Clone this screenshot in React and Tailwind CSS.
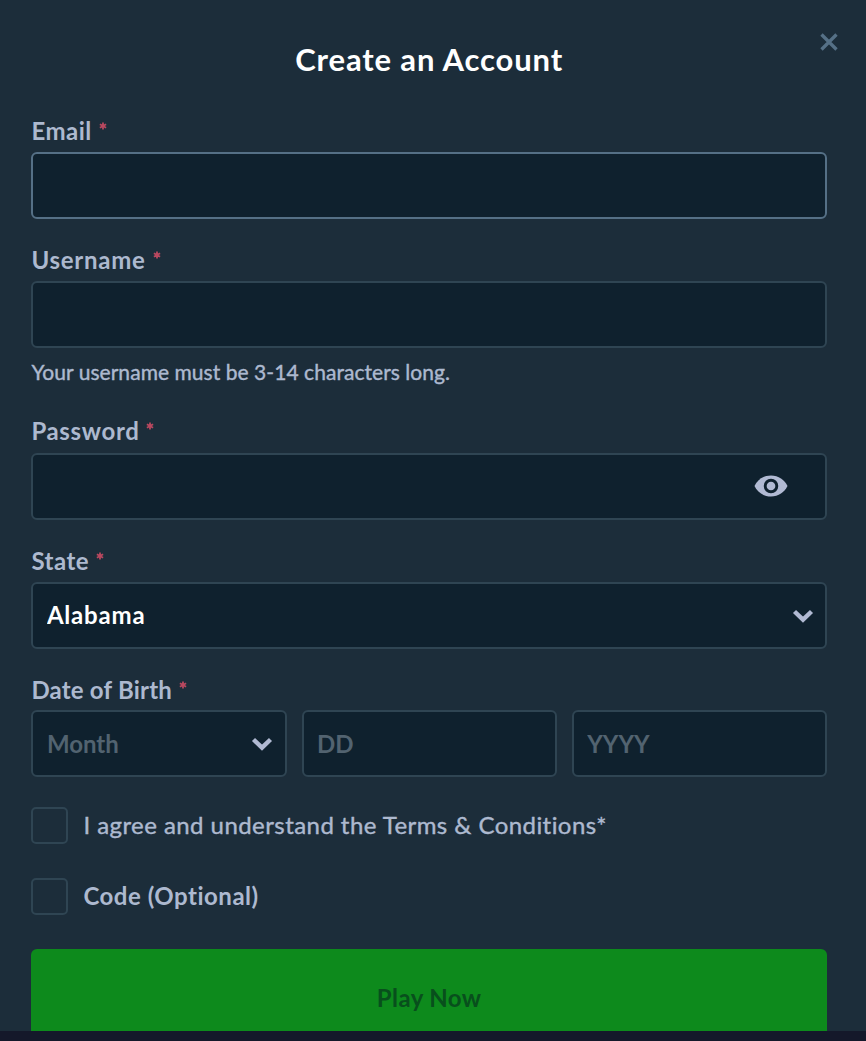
import { useState } from "react";

const boxClass =
  "block h-[67px] w-full rounded-[6px] border-2 bg-[#0f212e] px-[13.5px] text-2xl font-bold outline-none placeholder:text-[#526370] placeholder:opacity-100";
const inputClass = `${boxClass} border-[#2f4553] text-white`;

const states = ["Alabama", "Alaska", "Arizona", "Colorado", "Florida", "Texas"];
const months = ["January", "February", "March", "April", "May", "June"];

function Label({ text, className }) {
  return (
    <span className="mb-[6px] flex h-[30px] items-center text-2xl leading-[30px] font-bold whitespace-nowrap text-[#adb9cf]">
      <span className={`block ${className}`}>{text}</span>
      <svg className="mb-[11px] ml-2 h-2 w-2" viewBox="0 0 9 9">
        <path
          d="M4.5 .5V8.5M1 2.5L8 6.5M8 2.5L1 6.5"
          stroke="#b8485f"
          strokeWidth="2"
        />
      </svg>
    </span>
  );
}

function Chevron() {
  return (
    <svg
      className="pointer-events-none absolute top-[25.5px] right-[13.5px] h-[16px] w-[22px]"
      viewBox="0 0 22 16"
      fill="none"
    >
      <path d="M2.5 3.5L11 11.7L19.5 3.5" stroke="#b1bad3" strokeWidth="4.4" />
    </svg>
  );
}

function Eye() {
  return (
    <svg className="h-[22px] w-[34px]" viewBox="0 0 34 22">
      <path
        d="M17 .5C9.5 .5 3.5 4.7 .5 11C3.5 17.3 9.5 21.5 17 21.5S30.5 17.3 33.5 11C30.5 4.7 24.5 .5 17 .5Z"
        fill="#b1bad3"
      />
      <circle cx="17" cy="11" r="5.8" fill="#b1bad3" stroke="#0f212e" strokeWidth="2.9" />
    </svg>
  );
}

export default function App() {
  const [show, setShow] = useState(false);
  const [month, setMonth] = useState("");

  return (
    <div className="h-[1041px] overflow-hidden bg-[#14182a] font-[Lato,'Open_Sans',sans-serif]">
      <div className="relative h-[1031px] overflow-hidden bg-[#1c2d3a] pt-[41px] pr-[39px] pl-[31.4px]">
        <button className="absolute top-[32px] right-[27px] h-5 w-5" aria-label="Close">
          <svg className="h-5 w-5" viewBox="0 0 20 20" fill="none">
            <path d="M2.5 2.5L17.5 17.5M17.5 2.5L2.5 17.5" stroke="#557086" strokeWidth="3.3" />
          </svg>
        </button>
        <h1 className="text-center text-[31px] leading-[36px] font-bold tracking-[0.85px] text-white">
          Create an Account
        </h1>

        <form onSubmit={(e) => e.preventDefault()}>
          <label className="mt-[39px] block">
            <Label text="Email" className="w-[60px] tracking-[0.5px]" />
            <input type="email" className={`${boxClass} border-[#557086] text-white`} />
          </label>

          <label className="mt-[26px] block">
            <Label text="Username" className="w-[114px] tracking-[0.75px]" />
            <input type="text" className={inputClass} />
          </label>
          <p className="mt-[10px] text-[21px] leading-7 tracking-[0.05px] text-[#adb9cf] [-webkit-text-stroke:0.4px_#adb9cf]">
            Your username must be 3-14 characters long.
          </p>

          <label className="mt-[30px] block">
            <Label text="Password" className="mb-px w-[107px] tracking-[0.65px]" />
            <span className="relative mt-[7px] block">
              <input type={show ? "text" : "password"} className={inputClass} />
              <button
                type="button"
                className="absolute top-[22px] right-[39px]"
                onClick={() => setShow(!show)}
                aria-label="Show password"
              >
                <Eye />
              </button>
            </span>
          </label>

          <label className="mt-[26px] block">
            <Label text="State" className="w-[57px] tracking-[0.5px]" />
            <span className="relative block">
              <select className={`${inputClass} appearance-none pb-[2px] tracking-[0.8px]`}>
                {states.map((s) => (
                  <option key={s}>{s}</option>
                ))}
              </select>
              <Chevron />
            </span>
          </label>

          <div className="mt-[26px]">
            <Label text="Date of Birth" className="w-[140px] tracking-[0.2px]" />
            <div className="-mt-px grid grid-cols-3 gap-[15px]">
              <span className="relative block">
                <select
                  className={`${boxClass} appearance-none border-[#2f4553] ${month ? "text-white" : "text-[#526370]"}`}
                  value={month}
                  onChange={(e) => setMonth(e.target.value)}
                >
                  <option value="">Month</option>
                  {months.map((m) => (
                    <option key={m}>{m}</option>
                  ))}
                </select>
                <Chevron />
              </span>
              <input className={inputClass} placeholder="DD" />
              <input className={inputClass} placeholder="YYYY" />
            </div>
          </div>

          <label className="mt-[30px] flex h-[37px] items-center gap-[15px]">
            <input
              type="checkbox"
              className="h-[37px] w-[37px] appearance-none rounded-[5px] border-2 border-[#2f4553]"
            />
            <span className="mb-[2px] text-2xl tracking-[0.44px] text-[#adb9cf] [-webkit-text-stroke:0.4px_#adb9cf]">
              I agree and understand the Terms &amp; Conditions*
            </span>
          </label>
          <label className="mt-[34px] flex h-[37px] items-center gap-[15px]">
            <input
              type="checkbox"
              className="h-[37px] w-[37px] appearance-none rounded-[5px] border-2 border-[#2f4553]"
            />
            <span className="mb-[2px] text-2xl font-bold tracking-[0.52px] text-[#adb9cf]">
              Code (Optional)
            </span>
          </label>

          <button className="mt-[34px] h-[98px] w-full rounded-[6px] bg-[#0d8a1c] text-2xl font-bold tracking-[0.4px] text-[#084f1c]">
            Play Now
          </button>
        </form>
      </div>
    </div>
  );
}
